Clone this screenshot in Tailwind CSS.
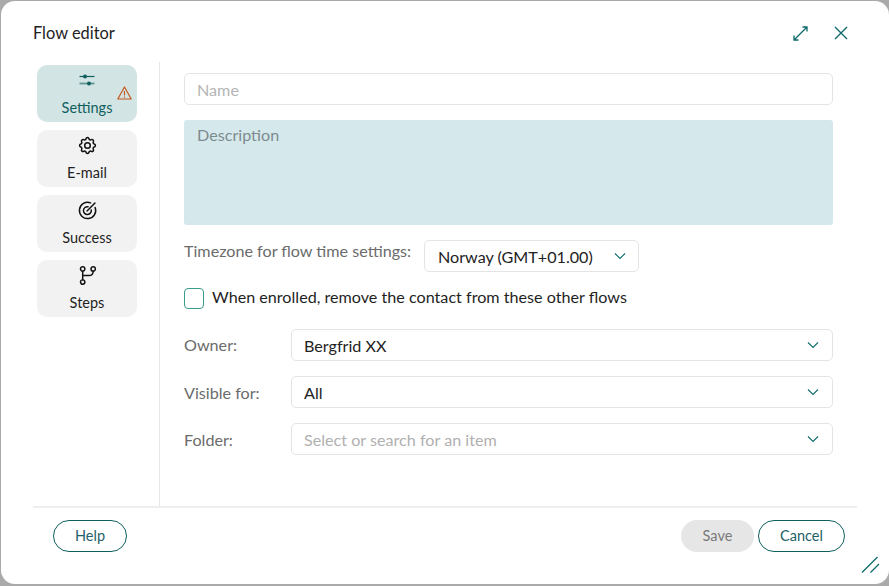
<!DOCTYPE html>
<html><head><meta charset="utf-8"><script src="https://cdn.jsdelivr.net/npm/@tailwindcss/browser@4"></script></head>
<body class="m-0">
<div class="w-[889px] h-[586px] bg-[#aaaaaa] pl-px pt-px pb-[2px] overflow-hidden font-['Lato',sans-serif]">
<div class="relative w-[888px] h-[583px] bg-white rounded-[14px] flex flex-col pl-8 pr-8">
  <header class="h-[61px] shrink-0 flex items-center justify-between pt-[3px]">
    <h1 class="text-[16.400px] leading-5 text-[#222] font-normal">Flow editor</h1>
    <div class="flex items-center gap-[26px] pr-[9px]">
      <svg class="w-[15px] h-[15px]" viewBox="0 0 15 15" fill="none" stroke="#0f6b6b" stroke-width="1.300"><path d="M1 14 14 1M9.500 1H14v4.500M5.500 14H1V9.500"/></svg>
      <svg class="w-[14px] h-[14px]" viewBox="0 0 14 14" fill="none" stroke="#0f6b6b" stroke-width="1.400"><path d="M1 1l12 12M13 1 1 13"/></svg>
    </div>
  </header>
  <div class="flex flex-1 min-h-0">
    <nav class="w-[127px] shrink-0 border-r border-[#e6e6e6] pl-1 pt-[3px] flex flex-col gap-2">
      <div class="relative w-[100px] h-[57px] rounded-[10px] bg-[#d3e4e4] flex flex-col items-center pt-[7px] text-[#0f5f5f]">
        <svg class="w-[18px] h-4" viewBox="0 0 18 16" fill="none"><path d="M1.500 4.500h15" stroke="#0f5f5f" stroke-width="1.200"/><circle cx="7" cy="4.500" r="2" fill="#0f5f5f"/><path d="M1.500 11.500h15" stroke="#5f9595" stroke-width="1.800"/><circle cx="11" cy="11.500" r="2" fill="#0f5f5f"/></svg>
        <span class="text-[14.500px] leading-4 mt-[12px]">Settings</span>
        <svg class="absolute right-[5px] top-[21px] w-[15px] h-[14px]" viewBox="0 0 15 14" fill="none" stroke="#c4591f" stroke-width="1.200"><path d="M7.500 1 14.200 13H.8Z" stroke-linejoin="round"/><path d="M7.500 5v4.500M7.500 10.500v1.200"/></svg>
      </div>
      <div class="w-[100px] h-[57px] rounded-[10px] bg-[#f2f2f2] flex flex-col items-center pt-[5px] text-[#1f1f1f]">
        <svg class="w-[21px] h-[21px]" viewBox="0 0 24 24" fill="none" stroke="#111" stroke-width="1.700" stroke-linecap="round" stroke-linejoin="round"><path d="M10.300 4.300c.4-1.800 3-1.800 3.400 0a1.700 1.700 0 0 0 2.600 1.100c1.500-.9 3.300.8 2.400 2.400a1.700 1.700 0 0 0 1 2.500c1.800.4 1.800 3 0 3.400a1.700 1.700 0 0 0-1 2.600c.9 1.500-.9 3.300-2.400 2.400a1.700 1.700 0 0 0-2.600 1c-.4 1.800-3 1.800-3.400 0a1.700 1.700 0 0 0-2.600-1c-1.500.9-3.300-.9-2.400-2.400a1.700 1.700 0 0 0-1-2.600c-1.800-.4-1.800-3 0-3.400a1.700 1.700 0 0 0 1-2.500c-.9-1.600.9-3.300 2.400-2.400a1.700 1.700 0 0 0 2.600-1.100Z"/><circle cx="12" cy="12" r="3.200"/></svg>
        <span class="text-[14.500px] leading-4 mt-[9px]">E-mail</span>
      </div>
      <div class="w-[100px] h-[57px] rounded-[10px] bg-[#f2f2f2] flex flex-col items-center pt-[5px] text-[#1f1f1f]">
        <svg class="w-[21px] h-[21px]" viewBox="0 0 24 24" fill="none" stroke="#111" stroke-width="1.700" stroke-linecap="round" stroke-linejoin="round"><path d="M20.700 8.500A9.300 9.300 0 1 1 15.500 3.300"/><path d="M16.300 11.300A4.500 4.500 0 1 1 12.700 7.700"/><path d="M11.500 12.500 20.500 3.500"/></svg>
        <span class="text-[14.500px] leading-4 mt-[9px]">Success</span>
      </div>
      <div class="w-[100px] h-[57px] rounded-[10px] bg-[#f2f2f2] flex flex-col items-center pt-[5px] text-[#1f1f1f]">
        <svg class="w-[21px] h-[21px]" viewBox="0 0 24 24" fill="none" stroke="#111" stroke-width="1.700" stroke-linecap="round" stroke-linejoin="round"><circle cx="6.500" cy="4.500" r="2.500"/><circle cx="6.500" cy="19.500" r="2.500"/><circle cx="18.500" cy="4.500" r="2.500"/><path d="M6.500 7v10M18.500 7c0 4-2 5-5 5H6.500"/></svg>
        <span class="text-[14.500px] leading-4 mt-[9px]">Steps</span>
      </div>
    </nav>
    <main class="flex-1 pl-6 pr-6 pt-[11px] text-[16.150px]">
      <div class="h-8 w-[649px] border border-[#e4e4e4] rounded-[5px] px-3 flex items-center text-[#b5b5b5]"><span class="relative top-px">Name</span></div>
      <div class="h-[105px] w-[649px] mt-[15px] bg-[#d5e9ed] rounded-[3px] px-[13px] pt-[3px] text-[#7d8b8d]">Description</div>
      <div class="flex items-start mt-[15px] h-8">
        <span class="w-[240px] text-[#6b6b6b] leading-5 pt-px">Timezone for flow time settings:</span>
        <div class="w-[215px] h-8 border border-[#e4e4e4] rounded-[5px] pl-[13px] pr-[12px] flex items-center justify-between text-[#222]">
          <span class="relative top-px">Norway (GMT+01.00)</span>
          <svg class="w-3 h-3" viewBox="0 0 12 12" fill="none" stroke="#0f6b6b" stroke-width="1.100"><path d="M1 3.500 6 8.500 11 3.500"/></svg>
        </div>
      </div>
      <div class="flex items-center mt-4 h-[21px] text-[#1f1f1f]">
        <span class="w-5 h-[21px] border border-[#3c9c8c] rounded-[4px] mr-2"></span><span class="relative -top-px">When enrolled, remove the contact from these other flows</span>
      </div>
      <div class="flex flex-col gap-[15px] mt-5">
        <div class="flex items-center w-[649px]"><span class="w-[107px] text-[#6b6b6b]">Owner:</span>
          <div class="flex-1 h-8 border border-[#e4e4e4] rounded-[5px] pl-3 pr-[13px] flex items-center justify-between text-[#222]"><span class="relative top-px">Bergfrid XX</span><svg class="w-3 h-3" viewBox="0 0 12 12" fill="none" stroke="#0f6b6b" stroke-width="1.100"><path d="M1 3.500 6 8.500 11 3.500"/></svg></div></div>
        <div class="flex items-center w-[649px]"><span class="w-[107px] text-[#6b6b6b] relative top-px">Visible for:</span>
          <div class="flex-1 h-8 border border-[#e4e4e4] rounded-[5px] pl-3 pr-[13px] flex items-center justify-between text-[#222]"><span class="relative top-px">All</span><svg class="w-3 h-3" viewBox="0 0 12 12" fill="none" stroke="#0f6b6b" stroke-width="1.100"><path d="M1 3.500 6 8.500 11 3.500"/></svg></div></div>
        <div class="flex items-center w-[649px]"><span class="w-[107px] text-[#6b6b6b] relative top-px">Folder:</span>
          <div class="flex-1 h-8 border border-[#e4e4e4] rounded-[5px] pl-3 pr-[13px] flex items-center justify-between text-[#b0b0b0]"><span class="relative top-px">Select or search for an item</span><svg class="w-3 h-3" viewBox="0 0 12 12" fill="none" stroke="#0f6b6b" stroke-width="1.100"><path d="M1 3.500 6 8.500 11 3.500"/></svg></div></div>
      </div>
    </main>
  </div>
  <footer class="h-[78px] shrink-0 border-t-2 border-[#eeeeee] pl-5 pr-3 pt-3 flex items-start justify-between text-[14.500px]">
    <button class="w-[74px] h-8 rounded-full border border-[#0f5f5f] text-[#1f5f6b]">Help</button>
    <div class="flex gap-1">
      <button class="w-[73px] h-8 rounded-full bg-[#e6e6e6] text-[#7a7a7a]">Save</button>
      <button class="w-[87px] h-8 rounded-full border border-[#0f5f5f] text-[#1f5f6b]">Cancel</button>
    </div>
  </footer>
  <svg class="absolute right-[9px] bottom-[10px] w-[19px] h-[18px]" viewBox="0 0 19 18" fill="none" stroke="#0f6b6b" stroke-width="1.300"><path d="M1 16.500 16.500 1M9.500 16.500 18 8"/></svg>
</div>
</div>
</body></html>
